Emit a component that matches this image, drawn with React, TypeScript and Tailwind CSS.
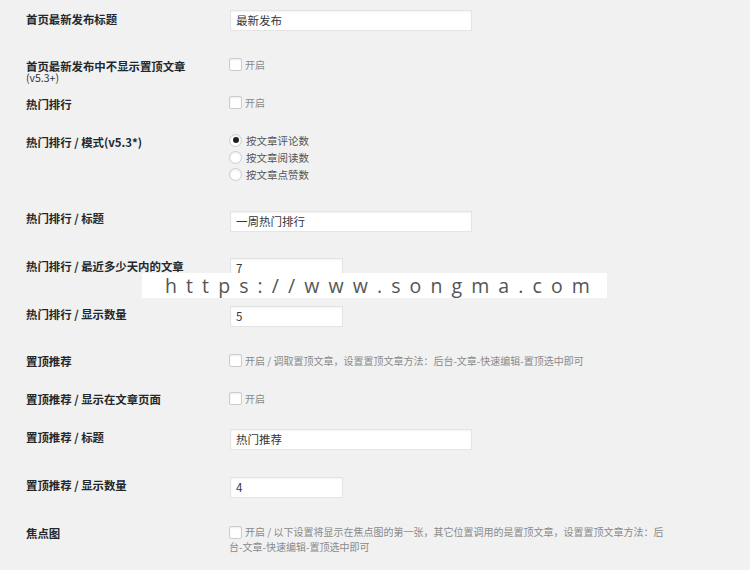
import React from "react";

const CJK = { fontFamily: '"Noto Sans CJK SC", "Noto Sans", sans-serif' };

function Label({ children, pt }: { children: React.ReactNode; pt: string }) {
  return (
    <div className={`w-[203px] shrink-0 text-[11.4px] leading-[15px] font-bold text-[#23282d] ${pt}`}>{children}</div>
  );
}

function Box() {
  return (
    <span className="inline-block w-[13px] h-[13px] shrink-0 bg-white border border-[#c9cdd1] rounded-[2px] shadow-[inset_0_1px_2px_rgba(0,0,0,0.08)] align-middle" />
  );
}

function Check({ mt, text }: { mt: string; text: string }) {
  return (
    <div className={`flex items-center gap-[3px] ${mt}`}>
      <Box />
      <span className="text-[10px] leading-[13px] text-[#8a8a8a]">{text}</span>
    </div>
  );
}

function Input({ mt, value, w }: { mt: string; value: string; w: string }) {
  return (
    <div
      className={`${mt} ${w} ml-[1px] h-[21px] bg-white border border-[#e4e4e4] shadow-[inset_0_1px_2px_rgba(0,0,0,0.05)] px-[5px] text-[11.5px] leading-[19px] text-[#32373c] flex items-center`}
    >
      {value}
    </div>
  );
}

function Radio({ on, text }: { on?: boolean; text: string }) {
  return (
    <div className="flex items-center gap-[4px] h-[17px]">
      <span className="w-[13px] h-[13px] rounded-full bg-white border border-[#c9cdd1] flex items-center justify-center shadow-[inset_0_1px_2px_rgba(0,0,0,0.08)]">
        {on && <span className="w-[6px] h-[6px] rounded-full bg-[#1e1e1e]" />}
      </span>
      <span className="text-[10.5px] leading-[13px] text-[#555]">{text}</span>
    </div>
  );
}

export default function App() {
  return (
    <div className="relative w-[750px] h-[570px] bg-[#f1f1f1] overflow-hidden" style={CJK}>
      <div className="flex flex-col pl-[26px]">
        <div className="flex h-[50px]">
          <Label pt="pt-[12px]">首页最新发布标题</Label>
          <Input mt="mt-[10px]" w="w-[242px]" value="最新发布" />
        </div>
        <div className="flex h-[40px]">
          <div className="w-[203px] shrink-0 pt-[9px]">
            <div className="text-[11.4px] leading-[14px] font-bold text-[#23282d]">首页最新发布中不显示置顶文章</div>
            <div className="text-[10.5px] leading-[10px] text-[#333]">(v5.3+)</div>
          </div>
          <Check mt="mt-[8px] self-start" text="开启" />
        </div>
        <div className="flex h-[40px]">
          <Label pt="pt-[7px]">热门排行</Label>
          <Check mt="mt-[6px] self-start" text="开启" />
        </div>
        <div className="flex h-[70px]">
          <Label pt="pt-[5px]">热门排行 / 模式(v5.3*)</Label>
          <div className="mt-[1.5px] flex flex-col">
            <Radio on text="按文章评论数" />
            <Radio text="按文章阅读数" />
            <Radio text="按文章点赞数" />
          </div>
        </div>
        <div className="flex h-[50px]">
          <Label pt="pt-[10.5px]">热门排行 / 标题</Label>
          <Input mt="mt-[10.5px]" w="w-[242px]" value="一周热门排行" />
        </div>
        <div className="flex h-[45px]">
          <Label pt="pt-[8.5px]">热门排行 / 最近多少天内的文章</Label>
          <Input mt="mt-[8px]" w="w-[113px]" value="7" />
        </div>
        <div className="flex h-[50px]">
          <Label pt="pt-[11.5px]">热门排行 / 显示数量</Label>
          <Input mt="mt-[11px]" w="w-[113px]" value="5" />
        </div>
        <div className="flex h-[40px]">
          <Label pt="pt-[8.5px]">置顶推荐</Label>
          <Check mt="mt-[8.5px] self-start" text="开启 / 调取置顶文章，设置置顶文章方法：后台-文章-快速编辑-置顶选中即可" />
        </div>
        <div className="flex h-[35px]">
          <Label pt="pt-[6.5px]">置顶推荐 / 显示在文章页面</Label>
          <Check mt="mt-[7px] self-start" text="开启" />
        </div>
        <div className="flex h-[50px]">
          <Label pt="pt-[9.5px]">置顶推荐 / 标题</Label>
          <Input mt="mt-[9px]" w="w-[242px]" value="热门推荐" />
        </div>
        <div className="flex h-[45px]">
          <Label pt="pt-[7.5px]">置顶推荐 / 显示数量</Label>
          <Input mt="mt-[7px]" w="w-[113px]" value="4" />
        </div>
        <div className="flex h-[55px]">
          <Label pt="pt-[10.5px]">焦点图</Label>
          <div className="mt-[9px] w-[440px] text-[10px] leading-[15px] text-[#8a8a8a]">
            <span className="inline-block w-[13px] h-[13px] bg-white border border-[#c9cdd1] rounded-[2px] shadow-[inset_0_1px_2px_rgba(0,0,0,0.08)] align-[-3px] mr-[3px]" />
            开启 / 以下设置将显示在焦点图的第一张，其它位置调用的是置顶文章，设置置顶文章方法：后台-文章-快速编辑-置顶选中即可
          </div>
        </div>
      </div>
      <div
        className="absolute left-[142px] top-[273px] w-[465px] h-[25px] bg-white flex items-center pl-[23px] text-[19.5px] tracking-[9.1px] text-[#555] whitespace-nowrap"
        style={{ fontFamily: '"Open Sans", sans-serif' }}
      >
        https://www.songma.com
      </div>
    </div>
  );
}
